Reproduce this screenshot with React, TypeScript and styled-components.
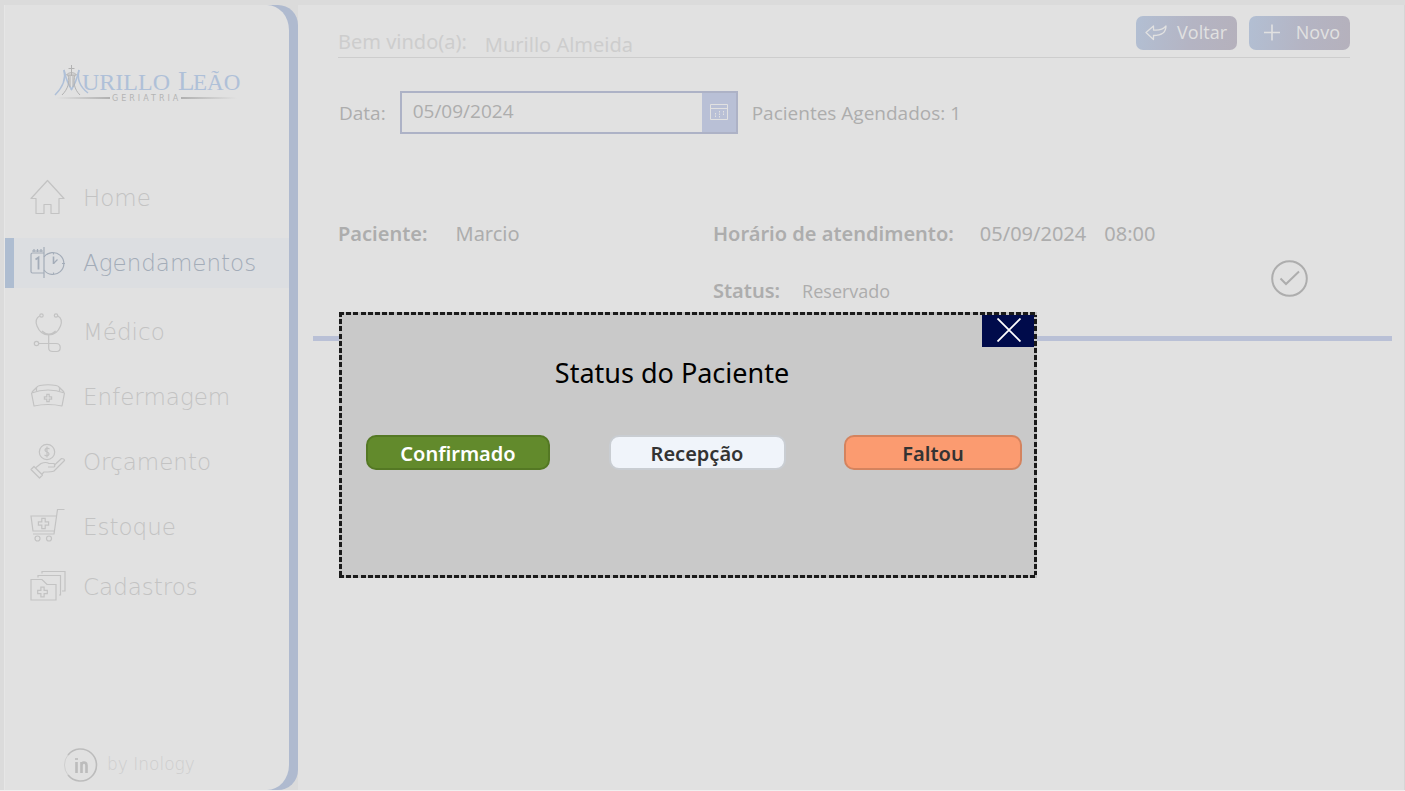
import React from "react";
import styled, { createGlobalStyle, css } from "styled-components";

const GlobalStyle = createGlobalStyle`
  *, *::before, *::after { box-sizing: border-box; }
  body {
    margin: 0;
    background: #f0f0f0;
    font-family: "Open Sans", "Noto Sans", sans-serif;
    color: #adadad;
  }
  button, input { font-family: inherit; }
  h2, p, dl, dd, dt, ul { margin: 0; padding: 0; }
`;

const wideSans = `"Noto Sans", "Open Sans", sans-serif`;

const Page = styled.div`
  position: relative;
  display: flex;
  min-height: calc(100vh - 1px);
  padding: 5px 0 0 4px;
  background: #dbdbdb;
`;

const Sidebar = styled.aside`
  display: flex;
  flex: 0 0 294px;
  padding-right: 9px;
  background: linear-gradient(90deg, #e1e1e1 250px, #afbacf 250px);
  border-radius: 0 20px 20px 0;
`;

const SidebarPanel = styled.div`
  display: flex;
  flex: 1;
  flex-direction: column;
  background: #e1e1e1;
  border-left: 1px solid #e6e6e6;
  border-radius: 0 22px 22px 0 / 0 25px 25px 0;
`;

const LogoLink = styled.a`
  display: block;
  height: 40px;
  margin: 60px 0 68px 47px;
`;

const NavList = styled.ul`
  display: flex;
  flex-direction: column;
  gap: 15px;
  list-style: none;

  li:last-child { margin-top: -5px; }
`;

const NavLink = styled.a<{ $active?: boolean }>`
  display: flex;
  align-items: center;
  gap: 16px;
  height: 50px;
  padding-left: 15px;
  border-left: 9px solid transparent;
  color: #c3c3c3;
  font: 200 23px/32px "DejaVu Sans", "DejaVu Sans Light", sans-serif;
  text-decoration: none;

  ${(p) =>
    p.$active &&
    css`
      margin-bottom: 4px;
      color: #a3acb8;
      background: #dcdee1;
      border-left-color: #aebdd1;
    `}
`;

const NavIcon = styled.svg`
  flex: none;
  width: 38px;
  height: 42px;
  fill: none;
  stroke: currentColor;
  stroke-width: 1.2;
`;

const Credit = styled.footer`
  display: flex;
  align-items: center;
  gap: 8px;
  margin: auto 0 8px 58px;
  color: #cecece;
  font: 200 17px/24px "DejaVu Sans", "DejaVu Sans Light", sans-serif;
`;

const Main = styled.main`
  flex: 1;
  min-width: 0;
  padding: 0 12px 0 15px;
  background: #e1e1e1;
  border-right: 1px solid #d6d6d6;
`;

const Header = styled.header`
  display: flex;
  align-items: flex-start;
  justify-content: space-between;
  height: 53px;
  margin: 0 42px 0 25px;
  padding-top: 11px;
  border-bottom: 1px solid #cdcdcd;
`;

const Welcome = styled.div`
  display: flex;
  gap: 18px;
  padding-top: 12px;
  color: #cdcdcd;
  font-family: ${wideSans};
  font-size: 20px;
  line-height: 28px;
`;

const UserName = styled.span`
  padding-top: 3px;
`;

const Actions = styled.div`
  display: flex;
  gap: 12px;
`;

const ActionButton = styled.button`
  display: flex;
  align-items: center;
  justify-content: space-between;
  width: 101px;
  height: 34px;
  padding: 0 10px 2px 8px;
  border: 0;
  border-radius: 7px;
  background: linear-gradient(100deg, #b2bfd3, #b4b4c3 55%, #b5b1bc);
  color: #e1e1e1;
  font-size: 18px;
  line-height: 24px;
`;

const Filters = styled.div`
  display: flex;
  align-items: center;
  gap: 14px;
  margin: 33px 0 0 26px;
  font-size: 19px;
  line-height: 26px;
`;

const DateBox = styled.div`
  display: flex;
  width: 338px;
  height: 43px;
  border: 2px solid #adb2c6;
`;

const DateInput = styled.input`
  flex: 1;
  min-width: 0;
  padding: 0 11px 4px;
  border: 0;
  background: transparent;
  color: #adadad;
  font-size: 19px;
`;

const CalendarButton = styled.button`
  display: grid;
  place-items: center;
  width: 34px;
  padding: 0 0 2px;
  border: 0;
  background: #b9c0d6;
`;

const Appointment = styled.article`
  display: grid;
  grid-template-columns: 375px 1fr auto;
  margin-top: 86px;
  padding: 0 84px 31px 25px;
  border-bottom: 5px solid #b9c0d6;
`;

const Fields = styled.dl`
  display: flex;
  flex-direction: column;
  gap: 29px;
`;

const Field = styled.div<{ $gap: number }>`
  display: flex;
  gap: ${(p) => p.$gap}px;
  font-family: ${wideSans};
  font-size: 20px;
  line-height: 28px;

  dt { font-weight: 600; }
`;

const Value = styled.dd<{ $small?: boolean }>`
  display: flex;
  gap: 18px;
  font-family: ${(p) => (p.$small ? `"Open Sans", sans-serif` : "inherit")};
  font-size: ${(p) => (p.$small ? 18 : 20)}px;
`;

const ConfirmButton = styled.button`
  align-self: end;
  width: 37px;
  height: 37px;
  margin-bottom: 8px;
  padding: 0;
  border: 0;
  background: none;
  color: #adadad;

  svg { display: block; }
`;

const dashes =
  "#1a1a1a 0 5px, #c2c2c2 5px 7px, #1a1a1a 7px 12px, #c2c2c2 12px 14px, #1a1a1a 14px 19px, #c2c2c2 19px 22px, #1a1a1a 22px 27px, #c2c2c2 27px 29px, #1a1a1a 29px 34px, #c2c2c2 34px 36px";

const Dialog = styled.section`
  position: absolute;
  top: 312px;
  left: 339px;
  width: 698px;
  height: 266px;
  padding: 42px 15px 0 27px;
  background: #c9c9c9;

  /* Short dashes on all four sides, above the close button. */
  &::after {
    content: "";
    position: absolute;
    inset: 0;
    pointer-events: none;
    background:
      repeating-linear-gradient(90deg, ${dashes}) top / 100% 3px no-repeat,
      repeating-linear-gradient(90deg, ${dashes}) bottom / 100% 3px no-repeat,
      repeating-linear-gradient(180deg, ${dashes}) left / 3px 100% no-repeat,
      repeating-linear-gradient(180deg, ${dashes}) right / 3px 100% no-repeat;
  }
`;

const CloseButton = styled.button`
  position: absolute;
  top: 2px;
  right: 1px;
  display: grid;
  place-items: center;
  width: 54px;
  height: 33px;
  padding: 0 0 1px;
  border: 0;
  background: #000b4b;
`;

const DialogTitle = styled.h2`
  padding-right: 44px;
  color: #000;
  font-family: ${wideSans};
  font-size: 27px;
  font-weight: 400;
  line-height: 38px;
  text-align: center;
`;

const Choices = styled.div`
  display: flex;
  justify-content: space-between;
  margin-top: 43px;
`;

const ChoiceButton = styled.button<{ $bg: string; $edge: string; $ink: string; $width: number }>`
  width: ${(p) => p.$width}px;
  height: 35px;
  padding: 2px 0 0;
  border: 2px solid ${(p) => p.$edge};
  border-radius: 10px;
  background: ${(p) => p.$bg};
  color: ${(p) => p.$ink};
  font-family: ${wideSans};
  font-size: 20px;
  font-weight: 600;
  line-height: 29px;
`;

const Logo = () => (
  <svg width="190" height="40" viewBox="0 0 190 40" role="img" aria-label="Murillo Leão Geriatria">
    <defs>
      <linearGradient id="ruleLeft">
        <stop offset="0" stopColor="#e1e1e1" />
        <stop offset="1" stopColor="#b0b0b0" />
      </linearGradient>
      <linearGradient id="ruleRight">
        <stop offset="0" stopColor="#b0b0b0" />
        <stop offset="1" stopColor="#e1e1e1" />
      </linearGradient>
    </defs>
    <g fill="none" stroke="#afc0d8" strokeWidth="1.5">
      <path d="M12 5C14 13 12 21 3 30" />
      <path d="M12 5C14 14 17 21 20 25" />
      <path d="M27 5C25 13 27 21 36 28" />
      <path d="M27 5C25 14 22 21 19 25" />
    </g>
    <g fill="none" stroke="#b2b2b2" strokeWidth="1">
      <path d="M19.500 0v11M16.500 3.500h6M14.500 10C16 7 23 7 24.500 10M14.500 10h10M16 10C18 17 16 24 10 30M23 10C21 17 22 24 28 30M18 10v12M21 10v12" />
    </g>
    <g fill="#afc0d8" fontFamily="Liberation Serif, serif" fontSize="24">
      <text x="30" y="25">URILLO</text>
      <text x="126" y="25" fontSize="27">L</text>
      <text x="141" y="25" fontSize="23">EÃO</text>
    </g>
    <rect x="4" y="32" width="54" height="2" fill="url(#ruleLeft)" />
    <rect x="129" y="32" width="56" height="2" fill="url(#ruleRight)" />
    <text x="60" y="36" fill="#b4b4b4" fontFamily="DejaVu Sans, sans-serif" fontSize="8" letterSpacing="3">
      GERIATRIA
    </text>
  </svg>
);

const cross = (x: number, y: number, s: number) =>
  `M${x - s} ${y - 3 * s}h${2 * s}v${2 * s}h${2 * s}v${2 * s}h${-2 * s}v${2 * s}h${-2 * s}v${-2 * s}h${-2 * s}v${-2 * s}h${2 * s}z`;

const icons: Record<string, React.ReactNode> = {
  home: <path d="M18.500 3.500 2 21.500h5V36.500h8v-9h7v9h8V21.500h5z" strokeLinejoin="round" />,
  schedule: (
    <>
      <path d="M14.500 11H3.500Q2 11 2 12.500V29.500q0 1.500 1.500 1.500H14.500M15 5v31M3 9h11M5 7v3M8.500 7v3M12 7v3" />
      <path d="M6.500 17.500l3-2v12" strokeWidth="1.800" />
      <path d="M15 15a11 11 0 1 1 0 13M24.500 21.500l4-4M24.500 10.500v2M24.500 30.500v2M33 21.500h3" />
      <path d="M24.500 14.500v7.500" strokeWidth="1.600" />
    </>
  ),
  doctor: (
    <>
      <circle cx="12.500" cy="4.500" r="1.700" />
      <circle cx="27" cy="4.500" r="1.700" />
      <path d="M10.700 5C7 7 6.500 11 8 15c2 5 5 9 11.700 9s9.800-4 11.800-9c1.500-4 1-8-2.700-10M13 20c4 4 9.700 4 13.700 0M19.700 24v13q0 3.500 4 3.500h4q3.500 0 3.500-4t-4-4H9.500" />
      <circle cx="7.500" cy="32.500" r="2.200" />
    </>
  ),
  nursing: (
    <>
      <path d="M2.500 17q16.500-6 33 0l-2.500 13q-14-3-28 0zM3 16l4.500-4.500v3.500M35 16l-4.500-4.500v3.500M8 11.500q0-1.500 3-2 8-1.500 16 0 3 .5 3 2" strokeLinejoin="round" />
      <path d={cross(19, 22, 1.200)} />
    </>
  ),
  budget: (
    <>
      <circle cx="18" cy="11" r="7.700" />
      <path d="M20.500 8q-2.500-1.700-4 0t1.500 3q3 1.300 1.500 3t-4 0M18 5.500v11" />
      <path d="M2 28.500l3-3 8.500 8.500-3 3zM7 26.500l5-4q5-2 8 0h5q2 2 0 3.500h-6M25 24.500l7.500-7q3 0 3 2L25 30q-2 1-10 1l-2 2" strokeLinejoin="round" />
    </>
  ),
  stock: (
    <>
      <path d="M35.500 3.500h-7l-3.500 24.500H4M27 10H2l2 15h21.500" />
      <path d={cross(14.500, 17.500, 1.700)} />
      <circle cx="8.500" cy="32.500" r="2.500" />
      <circle cx="20" cy="32.500" r="2.500" />
    </>
  ),
  records: (
    <>
      <path d="M2 13.500h11l5 5h9v15.500h-25zM9 11.500v-2h22.500v19.500h-1.500M13 7.500V5.500h23v19.500h-3" />
      <path d={cross(13.500, 26, 1.600)} />
    </>
  ),
};

const navItems = [
  { label: "Home", icon: "home" },
  { label: "Agendamentos", icon: "schedule", active: true },
  { label: "Médico", icon: "doctor" },
  { label: "Enfermagem", icon: "nursing" },
  { label: "Orçamento", icon: "budget" },
  { label: "Estoque", icon: "stock" },
  { label: "Cadastros", icon: "records" },
];

const choices = [
  { label: "Confirmado", bg: "#628a2c", edge: "#547824", ink: "#ffffff", width: 184 },
  { label: "Recepção", bg: "#f0f4fa", edge: "#c9cdd2", ink: "#333333", width: 177 },
  { label: "Faltou", bg: "#fb9b70", edge: "#d4835e", ink: "#333333", width: 178 },
];

export default function App() {
  return (
    <Page>
      <GlobalStyle />
      <Sidebar>
        <SidebarPanel>
          <LogoLink href="#home">
            <Logo />
          </LogoLink>
          <nav>
            <NavList>
              {navItems.map((item) => (
                <li key={item.label}>
                  <NavLink href={`#${item.icon}`} $active={item.active}>
                    <NavIcon viewBox="0 0 38 42" aria-hidden="true">
                      {icons[item.icon]}
                    </NavIcon>
                    {item.label}
                  </NavLink>
                </li>
              ))}
            </NavList>
          </nav>
          <Credit>
            <svg width="36" height="36" viewBox="0 0 36 36" fill="none" stroke="#bcbcbc" aria-hidden="true">
              <path d="M5 9A16 16 0 1 1 5 29" strokeWidth="1.600" />
              <path d="M5 9a16 16 0 0 0 0 20" strokeWidth=".5" />
              <path d="M13.500 16v11M18.500 27V16M18.500 19.500q0-3 2.500-3t2.500 3v7.500" strokeWidth="2.600" />
              <path d="M12 13h3" strokeWidth="1.600" />
            </svg>
            <span>by Inology</span>
          </Credit>
        </SidebarPanel>
      </Sidebar>

      <Main>
        <Header>
          <Welcome>
            <span>Bem vindo(a):</span>
            <UserName>Murillo Almeida</UserName>
          </Welcome>
          <Actions>
            <ActionButton type="button">
              <svg width="24" height="18" viewBox="0 0 24 18" fill="none" stroke="currentColor" strokeWidth="1.300" strokeLinejoin="round" aria-hidden="true">
                <path d="M2 9.500 9.500 3v4C15 7.500 19 6.500 22 3c0 6-4 9.500-12.500 9.500v4z" />
              </svg>
              Voltar
            </ActionButton>
            <ActionButton type="button">
              <svg width="28" height="18" viewBox="0 0 28 18" stroke="currentColor" strokeWidth="1.600" aria-hidden="true">
                <path d="M7 9.500h16M15 1.500v16" />
              </svg>
              Novo
            </ActionButton>
          </Actions>
        </Header>

        <Filters>
          <label htmlFor="date">Data:</label>
          <DateBox>
            <DateInput id="date" type="text" defaultValue="05/09/2024" />
            <CalendarButton type="button" aria-label="Abrir calendário">
              <svg width="18" height="16" viewBox="0 0 18 16" fill="none" stroke="#e1e1e1" aria-hidden="true">
                <path d="M.5.5h17v15H.5zM.5 4.500h17" />
                <path d="M5.500 9v5M9.500 7v7M13.500 7v5" strokeDasharray="1.500 1" />
              </svg>
            </CalendarButton>
          </DateBox>
          <span>Pacientes Agendados: 1</span>
        </Filters>

        <Appointment>
          <Fields>
            <Field $gap={28}>
              <dt>Paciente:</dt>
              <Value>Marcio</Value>
            </Field>
          </Fields>
          <Fields>
            <Field $gap={26}>
              <dt>Horário de atendimento:</dt>
              <Value>
                <span>05/09/2024</span>
                <span>08:00</span>
              </Value>
            </Field>
            <Field $gap={22}>
              <dt>Status:</dt>
              <Value $small>Reservado</Value>
            </Field>
          </Fields>
          <ConfirmButton type="button" aria-label="Alterar status">
            <svg width="37" height="37" viewBox="0 0 37 37" fill="none" stroke="currentColor" strokeWidth="2">
              <circle cx="18.500" cy="18.500" r="17.300" />
              <path d="M9.500 18.500 15 24 28 11.500" />
            </svg>
          </ConfirmButton>
        </Appointment>
      </Main>

      <Dialog role="dialog" aria-labelledby="dialog-title">
        <DialogTitle id="dialog-title">Status do Paciente</DialogTitle>
        <Choices>
          {choices.map((c) => (
            <ChoiceButton key={c.label} type="button" $bg={c.bg} $edge={c.edge} $ink={c.ink} $width={c.width}>
              {c.label}
            </ChoiceButton>
          ))}
        </Choices>
        <CloseButton type="button" aria-label="Fechar">
          <svg width="24" height="24" viewBox="0 0 24 24" stroke="#fff" strokeWidth="1.800" aria-hidden="true">
            <path d="M.5.5l23 23M23.500.5l-23 23" />
          </svg>
        </CloseButton>
      </Dialog>
    </Page>
  );
}
